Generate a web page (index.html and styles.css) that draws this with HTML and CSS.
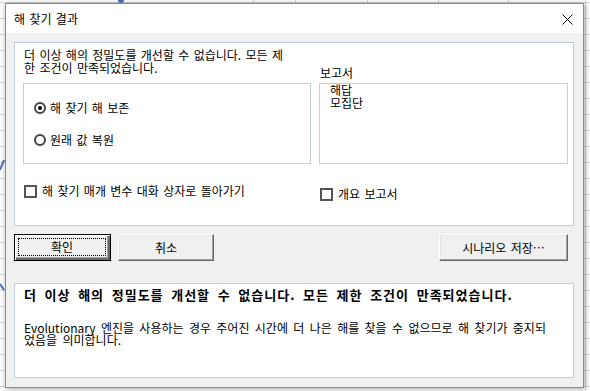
FILE: index.html
```html
<!DOCTYPE html>
<html lang="ko">
<head>
<meta charset="utf-8">
<title>해 찾기 결과</title>
<link rel="stylesheet" href="styles.css">
</head>
<body>
<div class="sheet">
  <div class="toprow">
    <span class="cell c1">15</span>
    <span class="cell c2">15</span>
    <span class="cell c3">0</span>
    <span class="cell c4">0.0034467</span>
    <span class="cell c5">0.5307714</span>
    <span class="cell c6">0.5556661</span>
  </div>
  <svg class="chart" width="590" height="391" viewBox="0 0 590 391">
    <polyline points="0,170 4,160" fill="none" stroke="#4472c4" stroke-width="2"/>
    <polyline points="0,284 4,290" fill="none" stroke="#4472c4" stroke-width="2"/>
    <circle cx="121" cy="0" r="3" fill="#4472c4"/>
  </svg>
</div>

<div class="dialog">
  <div class="titlebar">
    <span class="title">해 찾기 결과</span>
    <svg class="close" width="11" height="11" viewBox="0 0 11 11">
      <path d="M0.5 0.5 L10.5 10.5 M10.5 0.5 L0.5 10.5" stroke="#000" stroke-width="1" fill="none"/>
    </svg>
  </div>
  <div class="body">
    <div class="panel">
      <div class="msg">더 이상 해의 정밀도를 개선할 수 없습니다. 모든 제<br>한 조건이 만족되었습니다.</div>
      <div class="rlabel">보고서</div>
      <div class="group">
        <div class="opt opt1"><span class="radio on"></span><span>해 찾기 해 보존</span></div>
        <div class="opt opt2"><span class="radio"></span><span>원래 값 복원</span></div>
      </div>
      <div class="list">
        <div class="items">
          <div>해답</div>
          <div>모집단</div>
        </div>
      </div>
      <div class="check c-left"><span class="box"></span><span>해 찾기 매개 변수 대화 상자로 돌아가기</span></div>
      <div class="check c-right"><span class="box"></span><span>개요 보고서</span></div>
    </div>
    <div class="buttons">
      <button class="btn default"><span class="focus">확인</span></button>
      <button class="btn cancel">취소</button>
      <span class="spacer"></span>
      <button class="btn scenario">시나리오 저장…</button>
    </div>
    <div class="info">
      <div class="info-title">더 이상 해의 정밀도를 개선할 수 없습니다. 모든 제한 조건이 만족되었습니다.</div>
      <div class="info-text"><span class="line">Evolutionary 엔진을 사용하는 경우 주어진 시간에 더 나은 해를 찾을 수 없으므로 해 찾기가 중지되</span><span class="line">었음을 의미합니다.</span></div>
    </div>
  </div>
</div>
</body>
</html>
```

FILE: styles.css
```css
* { box-sizing: border-box; }

html, body {
  margin: 0;
  padding: 0;
}

body {
  width: 590px;
  height: 391px;
  overflow: hidden;
  position: relative;
  background: #ffffff;
  font-family: "Noto Sans CJK KR", "Noto Sans", sans-serif;
  font-size: 12px;
  word-spacing: 1px;
  color: #000;
}

.sheet {
  position: absolute;
  inset: 0;
  background-color: #fff;
  background-image:
    repeating-linear-gradient(to bottom, transparent 0, transparent 15px, #d4d4d4 15px, #d4d4d4 16px),
    linear-gradient(to right, transparent 585px, #d4d4d4 585px, #d4d4d4 586px, transparent 586px);
  background-position: 0 3px, 0 0;
}

.toprow {
  position: absolute;
  left: 0;
  top: -10px;
  width: 590px;
  height: 13px;
  border-bottom: 1px solid #d4d4d4;
  font-family: "Liberation Sans", sans-serif;
  font-size: 11px;
  line-height: 13px;
  word-spacing: 0;
  color: #222;
}

.cell {
  position: absolute;
  top: 0;
  height: 13px;
  border-right: 1px solid #d4d4d4;
  text-align: right;
  padding-right: 3px;
}
.c1 { left: 110px; width: 40px; border-right: none; }
.c2 { left: 170px; width: 84px; }
.c3 { left: 254px; width: 42px; }
.c4 { left: 296px; width: 72px; }
.c5 { left: 368px; width: 71px; }
.c6 { left: 439px; width: 70px; }

.chart {
  position: absolute;
  left: 0;
  top: 0;
}

.dialog {
  position: absolute;
  left: 5px;
  top: 3px;
  width: 579px;
  height: 385px;
  border: 1px solid #8a8a8a;
  background: #f0f0f0;
  box-shadow: 1px 1px 6px rgba(0, 0, 0, 0.35);
  display: flex;
  flex-direction: column;
}

.titlebar {
  height: 29px;
  background: #fff;
  display: flex;
  align-items: center;
  padding-left: 8px;
  padding-right: 10px;
  flex-shrink: 0;
}

.title {
  flex: 1;
  font-size: 12px;
  line-height: 14px;
  margin-top: 1px;
}

.close {
  display: block;
  margin-top: 1px;
}

.body {
  flex: 1;
  padding: 9px 9px 9px 8px;
  display: flex;
  flex-direction: column;
}

.panel {
  height: 184px;
  border: 1px solid #c2cfdc;
  background: #fff;
  padding-left: 8px;
  display: grid;
  grid-template-columns: 288px 249px;
  grid-template-rows: 40px 81px auto;
  column-gap: 8px;
}

.msg {
  padding-top: 5px;
  padding-left: 1px;
  line-height: 13px;
  white-space: nowrap;
}

.rlabel {
  align-self: end;
  line-height: 13px;
  padding-left: 1px;
  margin-bottom: 4px;
}

.group {
  border: 1px solid #c2cfdc;
  padding: 17px 0 0 10px;
}

.opt {
  display: flex;
  align-items: center;
  height: 14px;
  line-height: 14px;
  gap: 4px;
}
.opt2 { margin-top: 18px; }

.radio {
  width: 12px;
  height: 12px;
  border: 2px solid #444;
  border-radius: 50%;
  position: relative;
  flex-shrink: 0;
  background: #fff;
}
.radio.on::after {
  content: "";
  position: absolute;
  left: 2px;
  top: 2px;
  width: 4px;
  height: 4px;
  border-radius: 50%;
  background: #000;
}

.list {
  border: 1px solid #c2cfdc;
  padding-left: 10px;
}
.items {
  line-height: 13px;
  margin-top: -1px;
}

.check {
  display: flex;
  align-items: center;
  height: 14px;
  line-height: 14px;
  gap: 5px;
}
.c-left { margin-top: 20px; padding-left: 1px; }
.c-right { margin-top: 23px; padding-left: 1px; }

.box {
  width: 13px;
  height: 13px;
  border: 2px solid #555;
  background: #fff;
  flex-shrink: 0;
}

.buttons {
  margin-top: 8px;
  height: 27px;
  display: flex;
  gap: 7px;
  padding-right: 6px;
}

.spacer { flex: 1; }

.btn {
  height: 27px;
  margin: 0;
  padding: 0;
  font-family: "Noto Sans CJK KR", "Noto Sans", sans-serif;
  font-size: 12px;
  line-height: 14px;
  word-spacing: 1px;
  color: #000;
  background: #f0f0f0;
  border: 1px solid;
  border-color: #ffffff #696969 #696969 #ffffff;
  box-shadow: inset -1px -1px 0 #a0a0a0, inset 1px 1px 0 #e3e3e3;
  display: flex;
  align-items: center;
  justify-content: center;
}

.btn.default {
  width: 97px;
  border: 1px solid #000;
  box-shadow: inset 1px 1px 0 #fff, inset -2px -2px 0 #696969, inset -3px -3px 0 #a0a0a0;
  padding: 3px 4px 4px 3px;
}

.focus {
  flex: 1;
  align-self: stretch;
  border: 1px dotted #000;
  display: flex;
  align-items: center;
  justify-content: center;
}

.cancel { width: 96px; }
.scenario { width: 129px; }

.info {
  margin-top: 22px;
  height: 95px;
  border: 1px solid #c2cfdc;
  background: #fff;
  padding: 3px 0 0 9px;
}

.info-title {
  font-weight: bold;
  font-size: 13px;
  line-height: 15px;
  letter-spacing: 1px;
  word-spacing: 3px;
  white-space: nowrap;
}

.info-text {
  margin-top: 20px;
  line-height: 12px;
  word-spacing: 2px;
}
.line {
  display: block;
  white-space: nowrap;
}
```
